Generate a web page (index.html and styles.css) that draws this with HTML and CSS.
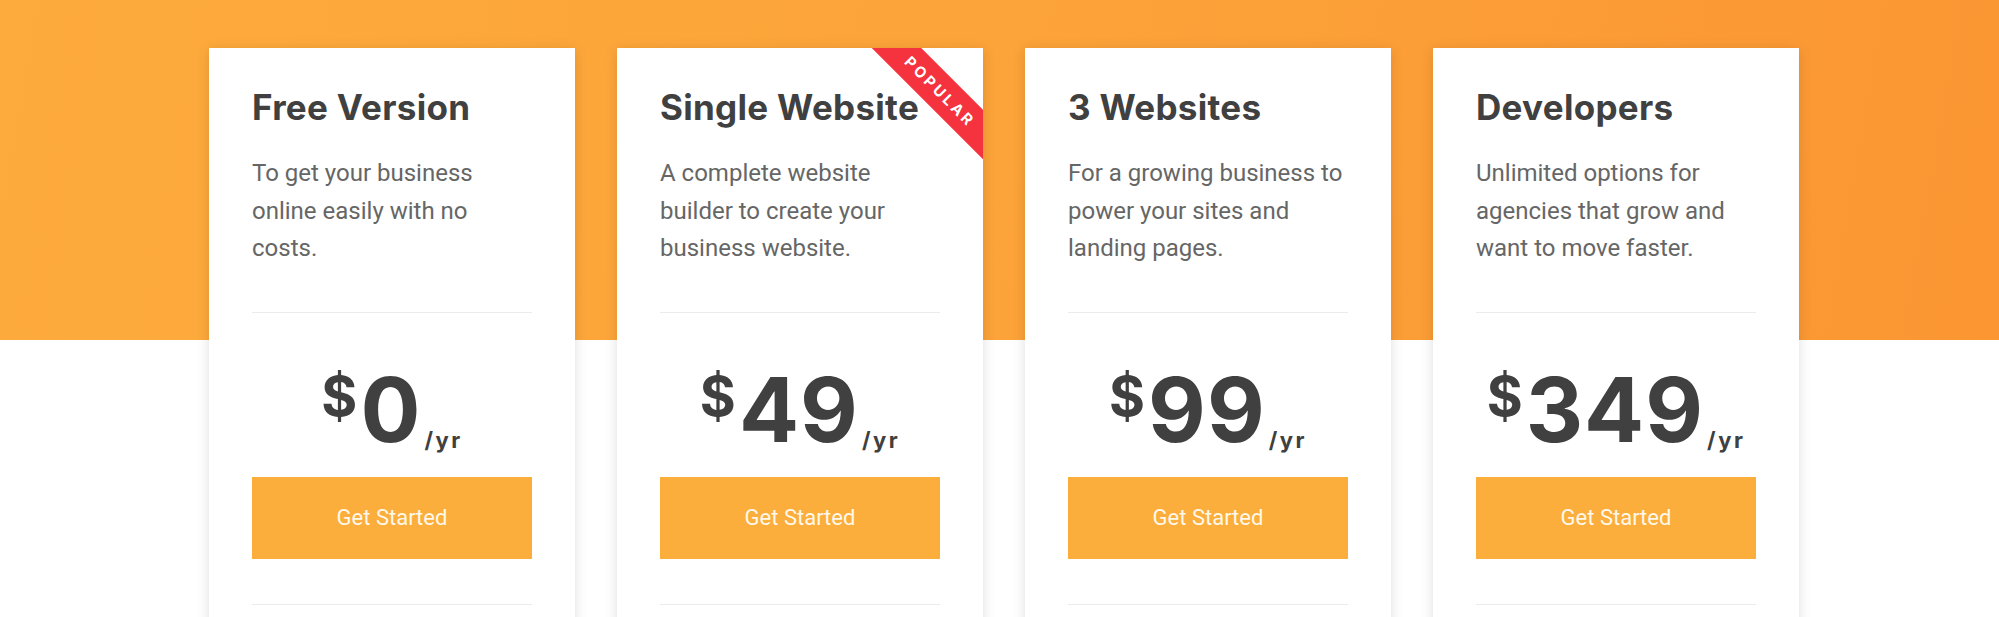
FILE: index.html
```html
<!DOCTYPE html>
<html lang="en">
<head>
<meta charset="utf-8">
<title>Pricing</title>
<link rel="stylesheet" href="styles.css">
</head>
<body>
<section class="pricing">
  <div class="cards">
    <div class="card">
      <div class="head">
        <h3 class="title">Free Version</h3>
        <p class="desc">To get your business online easily with no costs.</p>
      </div>
      <div class="divider"></div>
      <div class="price"><span class="cur">$</span><span class="amount">0</span><span class="per">/yr</span></div>
      <a class="btn" href="#">Get Started</a>
      <div class="divider"></div>
    </div>
    <div class="card">
      <div class="ribbon">POPULAR</div>
      <div class="head">
        <h3 class="title">Single Website</h3>
        <p class="desc">A complete website builder to create your business website.</p>
      </div>
      <div class="divider"></div>
      <div class="price"><span class="cur">$</span><span class="amount">49</span><span class="per">/yr</span></div>
      <a class="btn" href="#">Get Started</a>
      <div class="divider"></div>
    </div>
    <div class="card">
      <div class="head">
        <h3 class="title">3 Websites</h3>
        <p class="desc">For a growing business to power your sites and landing pages.</p>
      </div>
      <div class="divider"></div>
      <div class="price"><span class="cur">$</span><span class="amount">99</span><span class="per">/yr</span></div>
      <a class="btn" href="#">Get Started</a>
      <div class="divider"></div>
    </div>
    <div class="card">
      <div class="head">
        <h3 class="title">Developers</h3>
        <p class="desc">Unlimited options for agencies that grow and want to move faster.</p>
      </div>
      <div class="divider"></div>
      <div class="price"><span class="cur">$</span><span class="amount">349</span><span class="per">/yr</span></div>
      <a class="btn" href="#">Get Started</a>
      <div class="divider"></div>
    </div>
  </div>
</section>
</body>
</html>
```

FILE: styles.css
```css
* { box-sizing: border-box; }
html, body { margin: 0; padding: 0; background: #fff; }
body { font-family: Roboto, "Liberation Sans", sans-serif; overflow: hidden; }

.pricing {
  background: linear-gradient(100deg, #fdab3c 0%, #fca339 50%, #fb9633 100%) no-repeat;
  background-size: 100% 340px;
  padding-top: 48px;
}

.cards {
  display: flex;
  gap: 42px;
  padding-left: 209px;
}

.card {
  position: relative;
  overflow: hidden;
  width: 366px;
  flex: none;
  background: #fff;
  box-shadow: 0 2px 12px rgba(0, 0, 0, 0.13);
  padding: 0 43px 120px;
}

.head { padding-top: 39px; }

.title {
  margin: 0;
  font-family: Inter, "Open Sans", sans-serif;
  font-weight: 700;
  font-size: 35px;
  line-height: 41px;
  color: #404040;
  letter-spacing: 0.3px;
}

.desc {
  margin: 27px 0 0;
  font-size: 24px;
  line-height: 37.5px;
  color: #666;
  height: 112.5px;
}

.divider {
  height: 1px;
  background: #ebebeb;
}

.head + .divider { margin-top: 44px; }

.price {
  display: flex;
  justify-content: center;
  align-items: flex-start;
  margin-top: 52px;
  color: #404040;
  font-family: Inter, "Open Sans", sans-serif;
  font-weight: 700;
}

.cur {
  font-size: 55px;
  line-height: 1;
  margin-top: 4px;
  margin-right: 3px;
}

.amount {
  font-size: 89px;
  line-height: 1;
  letter-spacing: 1px;
}

.per {
  align-self: flex-end;
  font-size: 22px;
  line-height: 1;
  letter-spacing: 2.5px;
  margin: 0 0 3px 3px;
}

.btn {
  display: flex;
  align-items: center;
  justify-content: center;
  height: 82px;
  margin-top: 23px;
  background: #fcae3c;
  color: #fff8ea;
  font-size: 22px;
  text-decoration: none;
}

.btn + .divider { margin-top: 45px; }

.ribbon {
  position: absolute;
  top: 26px;
  right: -57px;
  width: 200px;
  height: 35px;
  background: #f5333f;
  color: #fff;
  transform: rotate(45deg);
  display: flex;
  align-items: center;
  justify-content: center;
  font-family: Inter, "Open Sans", sans-serif;
  font-weight: 700;
  font-size: 15px;
  letter-spacing: 3px;
}
```
